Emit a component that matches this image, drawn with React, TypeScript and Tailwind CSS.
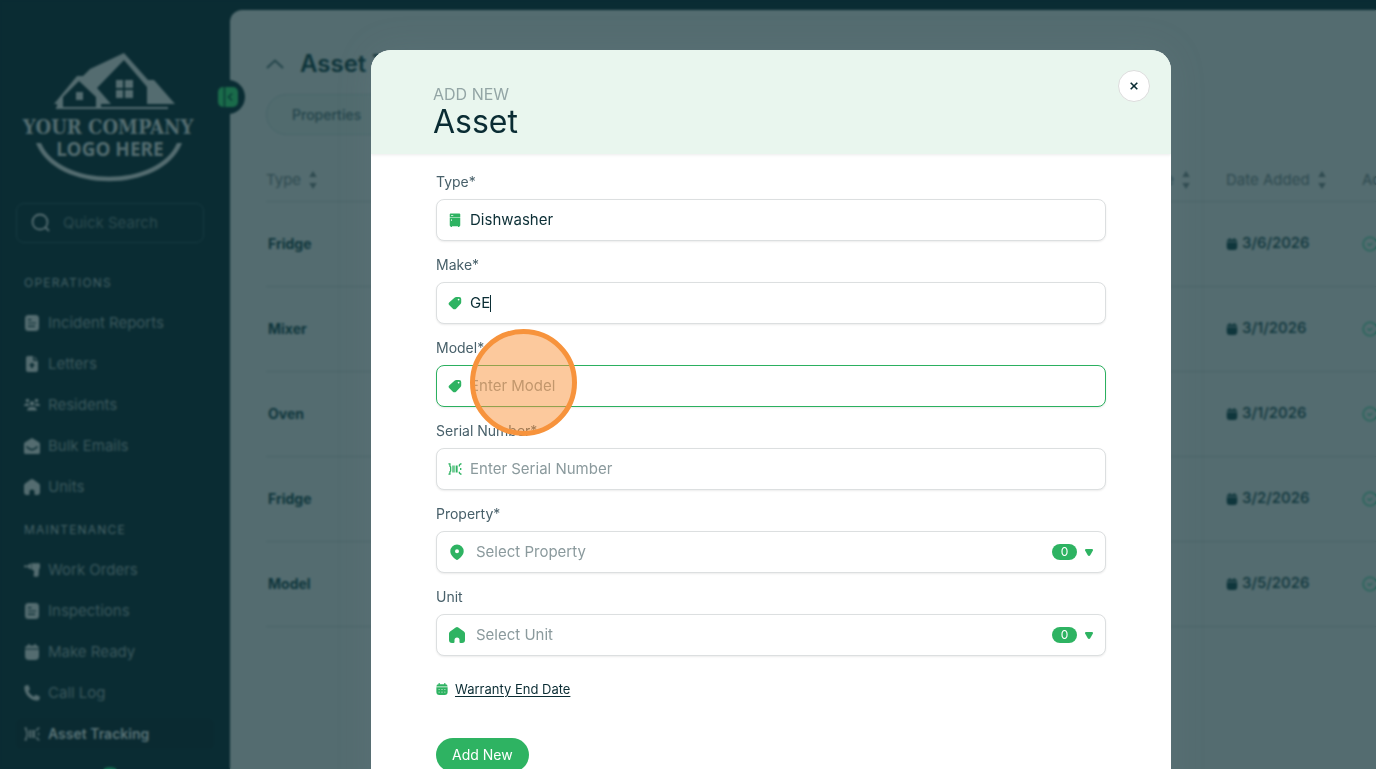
import React from 'react';

type IconProps = { className?: string };

const Svg = ({ className = '', children }: React.PropsWithChildren<IconProps>) => (
  <svg viewBox="0 0 16 16" fill="currentColor" aria-hidden="true" className={`shrink-0 ${className}`}>
    {children}
  </svg>
);

const ReportIcon = ({ className }: IconProps) => (
  <Svg className={className}>
    <path
      fillRule="evenodd"
      d="M4.500 0h7A3.500 3.500 0 0 1 15 3.500v9a3.500 3.500 0 0 1-3.500 3.500h-7A3.500 3.500 0 0 1 1 12.500v-9A3.500 3.500 0 0 1 4.500 0ZM4 4v1.200h3.500V4H4Zm0 3.400v1.200h8V7.400H4Zm0 3.400V12h7v-1.200H4Z"
    />
  </Svg>
);

const LetterIcon = ({ className }: IconProps) => (
  <Svg className={className}>
    <path
      fillRule="evenodd"
      d="M4 0h5v3.500A1.500 1.500 0 0 0 10.500 5H14v9a2 2 0 0 1-2 2H4a2 2 0 0 1-2-2V2a2 2 0 0 1 2-2Zm4 6.500L4.800 9.700h2.200V12h2V9.700h2.200L8 6.500Z"
    />
    <path d="M10 0l4 4h-3a1 1 0 0 1-1-1V0Z" opacity=".6" />
  </Svg>
);

const PeopleIcon = ({ className }: IconProps) => (
  <Svg className={className}>
    <circle cx="3.500" cy="3.500" r="1.800" />
    <circle cx="12.500" cy="3.500" r="1.800" />
    <circle cx="8" cy="6.500" r="2.200" />
    <path d="M0 9a2.600 2.600 0 0 1 2.600-2.600h2.200A3.400 3.400 0 0 0 5.500 9H0Zm16 0a2.600 2.600 0 0 0-2.600-2.600h-2.200A3.400 3.400 0 0 1 10.500 9H16ZM3.200 13.600A3.600 3.600 0 0 1 6.800 10h2.400a3.600 3.600 0 0 1 3.600 3.600H3.200Z" />
  </Svg>
);

const MailIcon = ({ className }: IconProps) => (
  <Svg className={className}>
    <path d="M8 0l7 4.200c.6.400 1 1 1 1.700v8.600c0 .8-.7 1.500-1.500 1.500h-13C.7 16 0 15.300 0 14.500V5.900c0-.7.400-1.300 1-1.700L8 0Z" />
    <path d="M2.500 8.500C5 11 6.500 11.700 8 11.700s3-.7 5.500-3.200" fill="none" stroke="#0a2c33" strokeWidth="1.500" />
  </Svg>
);

const HomeIcon = ({ className }: IconProps) => (
  <Svg className={className}>
    <path d="M6.700.5a2.200 2.200 0 0 1 2.600 0l5.600 4c.7.500 1.100 1.300 1.100 2.100V13a3 3 0 0 1-3 3h-1.500a1 1 0 0 1-1-1v-2a2.500 2.500 0 0 0-5 0v2a1 1 0 0 1-1 1H3a3 3 0 0 1-3-3V6.600c0-.8.400-1.600 1.100-2.100l5.600-4Z" />
  </Svg>
);

const DrillIcon = ({ className }: IconProps) => (
  <Svg className={className}>
    <path d="M0 3.600h4.500v1.600H0zM4.500 2.200 7 1.500v5.700L4.500 6.500zM7.500 1.300h7.300A1.200 1.200 0 0 1 16 2.500v3.200c0 .5-.4.900-.9 1l-.5 6.500a1.600 1.600 0 0 1-1.600 1.500h-2.200a1.200 1.200 0 0 1-1.200-1.400L10.200 9 7.500 7.200V1.300Z" />
  </Svg>
);

const BasketIcon = ({ className }: IconProps) => (
  <Svg className={className}>
    <path d="M4 0h1.600v1.500h4.800V0H12v1.600A3 3 0 0 1 15 4.500H1a3 3 0 0 1 3-2.900V0ZM1 5.500h14v6.500A4 4 0 0 1 11 16H5a4 4 0 0 1-4-4V5.500Z" />
  </Svg>
);

const PhoneIcon = ({ className }: IconProps) => (
  <Svg className={className}>
    <path d="M1.200.8 3.500.1c.5-.2 1 .1 1.200.6l1.200 3c.2.400.1.900-.3 1.200L4.200 6.100a11 11 0 0 0 5.600 5.600l1.300-1.500c.300-.300.800-.400 1.200-.300l3 1.300c.5.200.7.700.6 1.200l-.700 2.400c-.1.500-.5.800-1 .800A13.800 13.800 0 0 1 .3 1.900c0-.5.400-1 .9-1.100Z" />
  </Svg>
);

const BarcodeIcon = ({ className }: IconProps) => (
  <Svg className={className}>
    <path d="M5 4h1.500v8H5zM7.300 4h1v8h-1zM9.100 4h1.900v8H9.100z" />
    <path
      d="M.5 2.200h1.700v2.600L3 5.600v4.800l-.8.800v2.600H.5M15.500 2.200h-1.200L13 3.500V5M15.500 13.800h-1.200L13 12.500V11M14.500 6.800v2.400"
      fill="none"
      stroke="currentColor"
      strokeWidth="1.500"
    />
  </Svg>
);

const FridgeIcon = ({ className }: IconProps) => (
  <Svg className={className}>
    <path
      fillRule="evenodd"
      d="M3 .5h10a1 1 0 0 1 1 1V14a1 1 0 0 1-1 1v1h-1.600v-1H4.600v1H3v-1a1 1 0 0 1-1-1V1.500a1 1 0 0 1 1-1ZM3.500 2.500v1H6v-1H3.500ZM2 5v.6h12V5H2Zm1.500 2v2h.8V7h-.8Z"
    />
  </Svg>
);

const TagIcon = ({ className }: IconProps) => (
  <Svg className={className}>
    <path
      fillRule="evenodd"
      d="M9.500 1h3.300A2.300 2.300 0 0 1 15.100 3.300v3.900c0 .8-.3 1.500-.8 2l-4.800 5a3 3 0 0 1-4.200 0L1.600 10.700a2.600 2.600 0 0 1 0-3.700L7.400 1.900c.6-.6 1.300-.9 2.100-.9Zm2.600 2.100a1 1 0 1 0 0 2 1 1 0 0 0 0-2Z"
    />
  </Svg>
);

const PinIcon = ({ className }: IconProps) => (
  <Svg className={className}>
    <path
      fillRule="evenodd"
      d="M8 .5a6.700 6.700 0 0 1 6.700 6.700c0 3.500-2.800 6-5.300 8.100a2.200 2.200 0 0 1-2.800 0C4.100 13.200 1.300 10.700 1.300 7.200A6.700 6.700 0 0 1 8 .5Zm0 4.700a2 2 0 1 0 0 4 2 2 0 0 0 0-4Z"
    />
  </Svg>
);

const CalendarIcon = ({ className }: IconProps) => (
  <Svg className={className}>
    <path
      fillRule="evenodd"
      d="M3.500 0H5v1.500h6V0h1.500v1.600A3 3 0 0 1 15.500 4.500H.5a3 3 0 0 1 3-2.900V0ZM.5 5.500h15v6.500A4 4 0 0 1 11.500 16h-7A4 4 0 0 1 .5 12V5.500ZM3.500 8v1h1.300V8H3.500Zm3.800 0v1h1.400V8H7.300ZM11.200 8v1h1.300V8h-1.300Zm-7.700 3.500v1h1.300v-1H3.500Zm3.800 0v1h1.400v-1H7.300Zm3.900 0v1h1.300v-1h-1.300Z"
    />
  </Svg>
);

const SortIcon = () => (
  <svg viewBox="0 0 8 18" fill="currentColor" aria-hidden="true" className="h-[18px] w-2">
    <path d="M4 0l3.700 6H.3zM4 18l3.700-6H.3z" />
  </svg>
);

const Logo = () => (
  <svg viewBox="0 0 184 132" className="h-[132px] w-[184px] shrink-0" fill="#546c70" role="img" aria-label="Your Company Logo Here">
    <path d="M108 2 132 29H138L159 53H131V36L108 9 81 37 95 53H85V57H80V46L63 30 47 46V57H41V53H38L61 25H67L74 18Z" />
    <rect x="40" y="56" width="112" height="2" />
    <path d="M60 41h7v8h-7zM100 29h7v8h-7zM109 29h8v8h-8zM100 39h7v8h-7zM109 39h8v8h-8z" />
    <text x="92" y="83" textAnchor="middle" fontFamily="'DejaVu Serif Condensed', 'DejaVu Serif', serif" fontWeight="700" fontSize="20">
      YOUR COMPANY
    </text>
    <text x="94" y="105" textAnchor="middle" fontFamily="'Noto Sans', sans-serif" fontWeight="700" fontSize="19">
      LOGO HERE
    </text>
    <path d="M20 92h5C44 137 142 137 161 92h5C146 143 40 143 20 92Z" />
  </svg>
);

const operations = [
  { label: 'Incident Reports', Icon: ReportIcon },
  { label: 'Letters', Icon: LetterIcon },
  { label: 'Residents', Icon: PeopleIcon },
  { label: 'Bulk Emails', Icon: MailIcon },
  { label: 'Units', Icon: HomeIcon },
];

const maintenance = [
  { label: 'Work Orders', Icon: DrillIcon },
  { label: 'Inspections', Icon: ReportIcon },
  { label: 'Make Ready', Icon: BasketIcon },
  { label: 'Call Log', Icon: PhoneIcon },
  { label: 'Asset Tracking', Icon: BarcodeIcon, active: true },
];

type NavEntry = { label: string; Icon: React.FC<IconProps>; active?: boolean };

const NavGroup = ({ title, items }: { title: string; items: NavEntry[] }) => (
  <section>
    <h2 className="px-2 text-xs leading-5 tracking-widest text-[#456166]">{title}</h2>
    <ul className="mt-[15px] flex flex-col gap-[11px]">
      {items.map(({ label, Icon, active }) => (
        <li key={label}>
          <a
            href="#"
            className={`flex h-[30px] items-center gap-2 rounded-md px-2 ${
              active ? 'bg-[#0a2a31] text-sm font-semibold text-[#5b7478]' : 'text-[15px] text-[#3b585d]'
            }`}
          >
            <Icon className="size-4 text-[#546c70]" />
            {label}
          </a>
        </li>
      ))}
    </ul>
  </section>
);

const Sidebar = () => (
  <aside className="flex w-[230px] shrink-0 flex-col px-4 pt-[51px]">
    <Logo />
    <label className="mt-5 mr-[10px] flex h-10 shrink-0 items-center gap-3 rounded-lg border border-[#173a41] px-[14px]">
      <svg viewBox="0 0 20 20" fill="none" stroke="#546c70" strokeWidth="1.800" aria-hidden="true" className="size-5 shrink-0">
        <circle cx="9" cy="9" r="7.500" />
        <path d="M14.500 14.500 18 18" />
      </svg>
      <input
        type="search"
        aria-label="Quick Search"
        placeholder="Quick Search"
        className="w-full min-w-0 bg-transparent text-[15px] outline-none placeholder:text-[#2c4b50]"
      />
    </label>
    <nav className="mt-[30px] flex flex-col gap-[18px]">
      <NavGroup title="OPERATIONS" items={operations} />
      <NavGroup title="MAINTENANCE" items={maintenance} />
    </nav>
    <span className="mt-[18px] ml-20 size-7 shrink-0 rounded-full bg-[#12694f]" />
  </aside>
);

const rows = [
  { type: 'Fridge', added: '3/6/2026' },
  { type: 'Mixer', added: '3/1/2026' },
  { type: 'Oven', added: '3/1/2026' },
  { type: 'Fridge', added: '3/2/2026' },
  { type: 'Model', added: '3/5/2026' },
];

const HeadCell = ({ label }: { label: string }) => (
  <th scope="col" className="p-0 text-left font-normal">
    <span className="flex items-center gap-2">
      {label}
      <SortIcon />
    </span>
  </th>
);

const AssetTable = () => (
  <table className="mt-6 w-[calc(100%+100px)] table-fixed border-collapse text-[15px]">
    <colgroup>
      <col />
      <col className="w-[136px]" />
      <col className="w-[136px]" />
      <col className="w-[114px]" />
    </colgroup>
    <thead className="text-[#2f4b50]">
      <tr className="h-[42px] border-b border-[#4a6468]">
        <HeadCell label="Type" />
        <th scope="col" className="p-0 pr-9 font-normal">
          <span className="flex items-center justify-end gap-2">
            Date
            <SortIcon />
          </span>
        </th>
        <HeadCell label="Date Added" />
        <HeadCell label="Active" />
      </tr>
    </thead>
    <tbody className="text-[#0f363c]">
      {rows.map((row, index) => (
        <tr key={index} className="h-[85px] border-b border-[#4a6468]">
          <td className="p-0 pl-0.5 text-sm font-bold">{row.type}</td>
          <td className="p-0" />
          <td className="p-0 font-medium">
            <span className="flex items-center gap-1">
              <BasketIcon className="size-3" />
              {row.added}
            </span>
          </td>
          <td className="p-0">
            <svg viewBox="0 0 16 16" fill="none" stroke="#28665c" strokeWidth="1.600" aria-hidden="true" className="size-4">
              <circle cx="8" cy="8" r="6.800" />
              <path d="M5.500 7.500 7.500 9.500 10.500 7" />
            </svg>
          </td>
        </tr>
      ))}
    </tbody>
  </table>
);

const Background = () => (
  <div className="flex h-screen overflow-hidden bg-[#0a2c33]">
    <Sidebar />
    <main className="relative mt-[10px] min-w-0 flex-1 rounded-tl-xl bg-[#546c70] pt-9 pl-9">
      <button
        type="button"
        aria-label="Collapse sidebar"
        className="absolute top-[70px] -left-[19px] flex size-[34px] items-center justify-center rounded-full bg-[#0a2c33]"
      >
        <svg viewBox="0 0 20 20" aria-hidden="true" className="mr-px size-5">
          <rect x="0" y="0" width="20" height="20" rx="5" fill="#1a6b4a" />
          <path d="M6.500 0v20M14 6.500 10.500 10l3.500 3.500" fill="none" stroke="#0a3c37" strokeWidth="1.600" />
        </svg>
      </button>
      <header className="flex h-9 items-center gap-4">
        <svg viewBox="0 0 18 10" fill="none" stroke="#24454b" strokeWidth="2" aria-hidden="true" className="h-[10px] w-[18px]">
          <path d="M1 9 9 1.500 17 9" />
        </svg>
        <h1 className="text-2xl font-semibold text-[#0e343a]">Asset Tracking</h1>
      </header>
      <div className="mt-3 flex h-[41px] w-[220px] items-center rounded-full border border-[#48666a] bg-[#516b6e] px-[25px] text-sm font-medium text-[#24454b]">
        Properties
      </div>
      <AssetTable />
    </main>
  </div>
);

const inputClass = 'min-w-0 bg-transparent text-[15px] text-[#0b2e35] outline-none placeholder:text-[#8b9a9d]';

type FieldProps = React.PropsWithChildren<{ id: string; label: string; focused?: boolean }>;

const Field = ({ id, label, focused, children }: FieldProps) => (
  <div>
    <label htmlFor={id} className="mb-[7px] block text-sm leading-5 text-[#48606a]">
      {label}
    </label>
    <div
      className={`relative flex h-[42px] items-center rounded-lg border bg-white pr-3 pl-[11px] shadow-[0_1px_2px_rgba(0,0,0,0.08)] ${
        focused ? 'border-[#2bb05f]' : 'border-[#dcdfe0]'
      }`}
    >
      {children}
    </div>
  </div>
);

const SelectBody = ({ id, placeholder, Icon }: { id: string; placeholder: string; Icon: React.FC<IconProps> }) => (
  <>
    <Icon className="ml-px size-4 text-[#2eb362]" />
    <select id={id} className="ml-[11px] min-w-0 flex-1 appearance-none bg-transparent text-[15px] text-[#8b9a9d] outline-none">
      <option>{placeholder}</option>
    </select>
    <span className="flex h-4 w-[25px] items-center justify-center rounded-full bg-[#2eb362] text-xs text-white">0</span>
    <svg viewBox="0 0 8 7" fill="#2eb362" aria-hidden="true" className="ml-2 h-[7px] w-2">
      <path d="M1 0h6c.9 0 1.300.9.900 1.600L5.200 6.300a1.400 1.400 0 0 1-2.400 0L.1 1.600C-.3.900.1 0 1 0Z" />
    </svg>
  </>
);

const AssetDialog = () => (
  <div role="dialog" aria-modal="true" aria-labelledby="dialog-title" className="h-fit w-full max-w-[800px] overflow-hidden rounded-[20px] bg-white shadow-[0_0_36px_rgba(130,150,155,0.15)]">
    <header className="relative flex h-[104px] flex-col bg-[#e9f6ee] pt-[34px] pl-[62px] shadow-[0_1px_3px_rgba(0,0,0,0.08)]">
      <p className="text-base leading-5 text-[#93a5a5]">ADD NEW</p>
      <h2 id="dialog-title" className="text-[32px] leading-9 text-[#0a2c33]">
        Asset
      </h2>
      <button
        type="button"
        aria-label="Close"
        className="absolute top-5 right-[21px] flex size-8 items-center justify-center rounded-full border border-[#dcdcdc] bg-white text-[#0a2c33]"
      >
        <svg viewBox="0 0 8 8" fill="none" stroke="currentColor" strokeWidth="1.600" aria-hidden="true" className="size-2">
          <path d="M.7.7l6.600 6.600M7.300.7.7 7.300" />
        </svg>
      </button>
    </header>
    <form className="px-[65px] pt-[18px] pb-10" onSubmit={(event) => event.preventDefault()}>
      <div className="flex flex-col gap-[14px]">
        <Field id="type" label="Type*">
          <FridgeIcon className="size-[14px] text-[#2eb362]" />
          <input id="type" defaultValue="Dishwasher" className={`ml-2 flex-1 ${inputClass}`} />
        </Field>
        <Field id="make" label="Make*">
          <TagIcon className="size-[14px] text-[#2eb362]" />
          <input id="make" defaultValue="GE" className={`ml-2 [field-sizing:content] ${inputClass}`} />
          <span className="h-[17px] w-px bg-[#0b2e35]" />
        </Field>
        <Field id="model" label="Model*" focused>
          <TagIcon className="size-[14px] text-[#2eb362]" />
          <input id="model" placeholder="Enter Model" className={`ml-2 flex-1 ${inputClass}`} />
          <span className="pointer-events-none absolute -top-[37px] left-[33px] z-10 size-[107px] rounded-full border-5 border-[#f7933c] bg-[#f9933c]/50" />
        </Field>
        <Field id="serial" label="Serial Number*">
          <BarcodeIcon className="size-[14px] text-[#2eb362]" />
          <input id="serial" placeholder="Enter Serial Number" className={`ml-2 flex-1 ${inputClass}`} />
        </Field>
        <Field id="property" label="Property*">
          <SelectBody id="property" placeholder="Select Property" Icon={PinIcon} />
        </Field>
        <Field id="unit" label="Unit">
          <SelectBody id="unit" placeholder="Select Unit" Icon={HomeIcon} />
        </Field>
      </div>
      <a href="#" className="mt-6 flex w-fit items-center gap-[7px] text-[13px] leading-[18px] text-[#0a2c33] underline underline-offset-2">
        <CalendarIcon className="size-3 text-[#2eb362]" />
        Warranty End Date
      </a>
      <button type="submit" className="mt-10 h-[34px] rounded-full bg-[#2eb362] px-4 text-sm text-white">
        Add New
      </button>
    </form>
  </div>
);

export default function App() {
  return (
    <div className="font-['Inter',sans-serif]">
      <Background />
      <div className="fixed inset-0 flex justify-center overflow-y-auto pt-[50px] pl-[166px] backdrop-blur-[1px] [scrollbar-width:none]">
        <AssetDialog />
      </div>
    </div>
  );
}
